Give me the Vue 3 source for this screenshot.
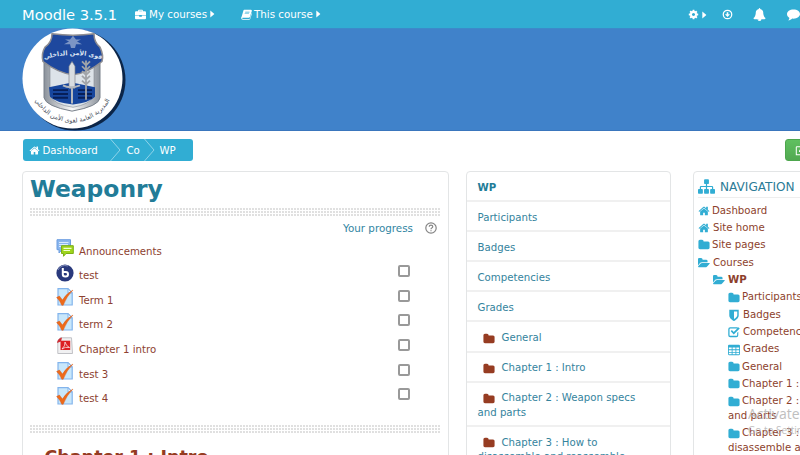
<script setup>
import { h } from 'vue'

const icons = {
  folder: ['0 0 1792 1792', 'M1728 608v704q0 92-66 158t-158 66h-1216q-92 0-158-66t-66-158v-960q0-92 66-158t158-66h320q92 0 158 66t66 158v32h672q92 0 158 66t66 158z'],
  open: ['0 0 1850 1792', 'M1815 952q0 31-31 66l-336 396q-43 51-120.500 86.500t-143.500 35.500h-1088q-34 0-60.500-13t-26.500-43q0-31 31-66l336-396q43-51 120.500-86.500t143.500-35.500h1088q34 0 60.500 13t26.500 43zm-343-344v160h-832q-94 0-197 47.500t-164 119.500l-337 396-5 6q0-4-.5-12.500t-.5-12.500v-960q0-92 66-158t158-66h320q92 0 158 66t66 158v32h544q92 0 158 66t66 158z'],
  home: ['0 0 1792 1792', 'M1472 992v480q0 26-19 45t-45 19h-384v-384h-256v384h-384q-26 0-45-19t-19-45v-480q0-1 .5-3t.5-3l575-474 575 474q1 2 1 6zm223-69l-62 74q-8 9-21 11h-3q-13 0-21-7l-692-577-692 577q-12 8-24 7-13-2-21-11l-62-74q-8-10-7-23.500t11-21.500l719-599q32-26 76-26t76 26l244 204v-195q0-14 9-23t23-9h192q14 0 23 9t9 23v408l219 182q10 8 11 21.500t-7 23.500z'],
  sitemap: ['0 0 1792 1792', 'M1792 1248v320q0 40-28 68t-68 28h-320q-40 0-68-28t-28-68v-320q0-40 28-68t68-28h96v-192h-512v192h96q40 0 68 28t28 68v320q0 40-28 68t-68 28h-320q-40 0-68-28t-28-68v-320q0-40 28-68t68-28h96v-192h-512v192h96q40 0 68 28t28 68v320q0 40-28 68t-68 28h-320q-40 0-68-28t-28-68v-320q0-40 28-68t68-28h96v-192q0-52 38-90t90-38h512v-192h-96q-40 0-68-28t-28-68v-320q0-40 28-68t68-28h320q40 0 68 28t28 68v320q0 40-28 68t-68 28h-96v192h512q52 0 90 38t38 90v192h96q40 0 68 28t28 68z'],
  bell: ['0 0 1792 1792', 'M912 1696q0-16-16-16-59 0-101.500-42.500t-42.500-101.500q0-16-16-16t-16 16q0 73 51.500 124.500t124.500 51.500q16 0 16-16zm816-288q0 52-38 90t-90 38h-448q0 106-75 181t-181 75-181-75-75-181h-448q-52 0-90-38t-38-90q50-42 91-88t85-119.500 74.500-158.500 50-206 19.500-260q0-152 117-282.500t307-158.500q-8-19-8-39 0-40 28-68t68-28 68 28 28 68q0 20-8 39 190 28 307 158.500t117 282.500q0 139 19.500 260t50 206 74.500 158.500 85 119.500 91 88z'],
  cog: ['0 0 1792 1792', 'M1152 896q0-106-75-181t-181-75-181 75-75 181 75 181 181 75 181-75 75-181zm512-109v222q0 12-8 23t-20 13l-185 28q-19 54-39 91 35 50 107 138 10 12 10 25t-9 23q-27 37-99 108t-94 71q-12 0-26-9l-138-108q-44 23-91 38-16 136-29 186-7 28-36 28h-222q-14 0-24.500-8.500t-11.500-21.500l-28-184q-49-16-90-37l-141 107q-10 9-25 9-14 0-25-11-126-114-165-168-7-10-7-23 0-12 8-23 15-21 51-66.500t54-70.500q-27-50-41-99l-183-27q-13-2-21-12.500t-8-23.500v-222q0-12 8-23t19-13l186-28q14-46 39-92-40-57-107-138-10-12-10-24 0-10 9-23 26-36 98.500-107.500t94.500-71.500q13 0 26 10l138 107q44-23 91-38 16-136 29-186 7-28 36-28h222q14 0 24.500 8.500t11.500 21.500l28 184q49 16 90 37l142-107q9-9 24-9 13 0 25 10 129 119 165 170 7 8 7 22 0 12-8 23-15 21-51 66.500t-54 70.500q26 50 41 98l183 28q13 2 21 12.500t8 23.500z'],
  caret: ['0 0 5 8', 'M.3 .6L4.400 4L.3 7.400z'],
  briefcase: ['0 0 14 14', 'M4 3V2q0-1 1-1h4q1 0 1 1v1h2.700q1.300 0 1.300 1.300V7.500H0V4.300Q0 3 1.300 3zM5.200 3h3.600V2.200H5.200zM0 8.300h5.300v1.500h3.400V8.300H14v3.400q0 1.300-1.300 1.300H1.300Q0 13 0 11.700z'],
  book: ['0 0 14 14', 'M4.200 1h8.300q1.700.2 1.200 1.800l-2.400 7.500q-.3.900-1.300.9H2q-.8.200-.5.900.3.500 1.100.5h8q.5 0 .7-.5L13.500 5q.6.600.3 1.500L11.700 12.800q-.4 1-1.400 1H2.300Q.3 13.700.2 11.600.2 10.700.9 9.600L3 2.200Q3.300 1.200 4.200 1zM5.500 3.500L5.200 4.300h5.500l.3-.8zM4.800 5.700l-.3.800H10l.3-.8z'],
  comment: ['0 0 14 14', 'M7 1.500c4 0 7 2.200 7 5s-3 5-7 5l-1.300-.1C4.400 12.600 3 13.200 1.400 13.400c.7-.8 1.100-1.600 1.200-2.700C1 9.700 0 8.200 0 6.500c0-2.800 3-5 7-5z'],
  down: ['0 0 14 14', 'M7 .8a6.200 6.200 0 1 1 0 12.400A6.200 6.200 0 0 1 7 .8zM7 2.400a4.600 4.600 0 1 0 0 9.200 4.600 4.600 0 0 0 0-9.200zM6 4h2v2.600h2.200L7 10.200 3.800 6.600H6z'],
  shield: ['0 0 14 14', 'M1.500 1h11v6.500C12.500 10.500 9 13 7 14 5 13 1.500 10.500 1.500 7.500zM7 2.800v9c2-1.200 3.800-2.700 3.800-4.500V2.800z'],
  check: ['0 0 14 14', 'M2.500 1.500h8q.7 0 1.200.3l-1 1H2.800q-1 0-1 1v6.700q0 1 1 1h6.900q1 0 1-1V8l1.300-1.300v4q0 2.300-2.300 2.300H2.500Q.3 13 .3 10.700V3.800q0-2.300 2.200-2.300zM3.200 6l1.300-1.300 2.200 2.200 5.500-5.400L13.700 3l-7 7z'],
  table: ['0 0 14 14', 'M1.200 1h11.600q1.200 0 1.200 1.200v9.600q0 1.200-1.200 1.200H1.200Q0 13 0 11.800V2.200Q0 1 1.200 1zM1 4v2.200h3.300V4zM5.300 4v2.200h3.400V4zM9.700 4v2.200H13V4zM1 7.200v2h3.300v-2zM5.300 7.200v2h3.400v-2zM9.700 7.200v2H13v-2zM1 10.200V12h3.300v-1.800zM5.300 10.200V12h3.400v-1.800zM9.700 10.200V12H13v-1.800z'],
  edit: ['0 0 14 14', 'M2.500 1.500h8v1.300H2.300v8.900h9V8l1.300-1v6H1V3q0-1.500 1.500-1.500zM5 8.800l.4-2.200L11.500.8l2 2L7.200 9z'],
}

const Icon = ({ name }) =>
  h('svg', { viewBox: icons[name][0], 'aria-hidden': 'true' }, [
    h('path', { d: icons[name][1], fill: 'currentColor', 'fill-rule': 'evenodd' }),
  ])
Icon.props = ['name']

const activities = [
  { type: 'forum', label: 'Announcements' },
  { type: 'bbb', label: 'test', track: true },
  { type: 'quiz', label: 'Term 1', track: true },
  { type: 'quiz', label: 'term 2', track: true },
  { type: 'pdf', label: 'Chapter 1 intro', track: true },
  { type: 'quiz', label: 'test 3', track: true },
  { type: 'quiz', label: 'test 4', track: true },
]

const links = [
  { label: 'WP', bold: true },
  { label: 'Participants' },
  { label: 'Badges' },
  { label: 'Competencies' },
  { label: 'Grades' },
  { label: 'General', folder: true },
  { label: 'Chapter 1 : Intro', folder: true },
  { label: 'Chapter 2 : Weapon specs', rest: 'and parts', folder: true },
  { label: 'Chapter 3 : How to', rest: 'disassemble and reassemble', folder: true },
]

const tree = [
  { icon: 'home', label: 'Dashboard', level: 0 },
  { icon: 'home', label: 'Site home', level: 0, wide: true },
  { icon: 'folder', label: 'Site pages', level: 0 },
  { icon: 'open', label: 'Courses', level: 0, wide: true },
  { icon: 'open', label: 'WP', level: 1, bold: true, wide: true },
  { icon: 'folder', label: 'Participants', level: 2 },
  { icon: 'shield', label: 'Badges', level: 2, wide: true },
  { icon: 'check', label: 'Competencies', level: 2, wide: true },
  { icon: 'table', label: 'Grades', level: 2, wide: true },
  { icon: 'folder', label: 'General', level: 2 },
  { icon: 'folder', label: 'Chapter 1 : Intro', level: 2 },
  { icon: 'folder', label: 'Chapter 2 :', rest: 'and parts', level: 2 },
  { icon: 'folder', label: 'Chapter 3 :', rest: 'disassemble and', level: 2 },
]
</script>

<template>
  <div class="page">
    <header class="topbar">
      <span class="brand">Moodle 3.5.1</span>
      <a class="menu courses"><Icon name="briefcase" class="mi" />My courses<Icon name="caret" class="caret" /></a>
      <a class="menu this"><Icon name="book" class="mi" />This course<Icon name="caret" class="caret" /></a>
      <div class="tools">
        <Icon name="cog" class="t-cog" /><Icon name="caret" class="caret" />
        <Icon name="down" class="t-down" /><Icon name="bell" class="t-bell" /><Icon name="comment" class="t-comment" />
      </div>
    </header>

    <div class="banner">
      <svg class="logo" viewBox="0 0 106 104">
        <defs>
          <path id="motto" d="M20 32Q51 22 82 32" />
          <path id="ring" d="M8 52A42.500 42.500 0 0 0 93 52" />
          <linearGradient id="silver" x1="0" x2="1"><stop offset="0" stop-color="#8b929b" /><stop offset=".5" stop-color="#fafafa" /><stop offset="1" stop-color="#8d949d" /></linearGradient>
        </defs>
        <circle cx="53" cy="52" r="50.500" fill="#0b2548" />
        <circle cx="50.500" cy="50.500" r="50" fill="#fff" />
        <g transform="translate(0 1) scale(1 .955)">
          <path d="M22 34V72Q24 81 50 86Q77 81 78 72V34z" fill="url(#silver)" stroke="#777f89" />
          <path d="M28 37H72V70Q68 79 51 82Q32 79 28 70z" fill="#dde3e9" stroke="#7e8791" stroke-width=".6" />
          <path d="M30 5Q51 8 72 5Q72 14 78 19Q82 28 80 34Q66 46 51 48Q36 46 21 34Q19 26 23 19Q30 14 30 5z" fill="#1e489e" stroke="#8e8d91" stroke-width="1.500" />
          <path d="M51 7L54 11H59L55 13L60 16H54L53 20H49L48 16H42L47 13L43 11H48z" fill="#7c95c5" />
          <path d="M27 61L50 56L73 61V71Q68 77 51 79Q33 77 28 71z" fill="#17469d" />
          <path d="M31 64H46M31 68H46M31 72H46M56 64H70M56 68H70M56 72H70" stroke="#071f58" stroke-width="2" />
          <path d="M47 39L50 34L53 39V62H47z" fill="#d9dde1" stroke="#81868e" stroke-width=".7" />
          <path d="M41 59Q48 63 58 59M50 61V78" fill="none" stroke="#b5b8bd" stroke-width="2" />
          <path d="M64 74V33M64 38l-4-4M64 38l4-4M64 43l-4-4M64 43l4-4M64 48l-4-4M64 48l4-4M64 53l-4-4M64 53l4-4M64 58l-4-4M64 58l4-4" stroke="#a1a4a8" stroke-width="1.800" fill="none" />
        </g>
        <text class="ar motto" text-anchor="middle"><textPath href="#motto" startOffset="50%">قوى الأمن الداخلي</textPath></text>
        <text class="ar ring" text-anchor="middle"><textPath href="#ring" startOffset="50%">المديرية العامة لقوى الأمن الداخلي</textPath></text>
      </svg>
    </div>

    <div class="crumbrow">
      <nav class="crumbs">
        <Icon name="home" class="ch" /><span class="c1">Dashboard</span>
        <svg class="chev" viewBox="0 0 11 22"><path d="M.5 0L10 11L.5 22" /></svg>
        <span class="c2">Co</span>
        <svg class="chev" viewBox="0 0 11 22"><path d="M.5 0L10 11L.5 22" /></svg>
        <span class="c3">WP</span>
      </nav>
      <button class="edit"><Icon name="edit" class="ei" /></button>
    </div>

    <div class="columns">
      <main class="panel main">
        <h1>Weaponry</h1>
        <div class="dots"></div>
        <div class="progress">Your progress
          <svg class="help" viewBox="0 0 12 12"><circle cx="6" cy="6" r="5.200" /><path d="M4.200 4.800Q4.300 3.200 6 3.200T7.800 4.700Q7.700 5.500 6.700 6Q6 6.400 6 7.200M6 8.300V9.300" /></svg>
        </div>
        <ul class="acts">
          <li v-for="a in activities" :key="a.label">
            <svg v-if="a.type === 'forum'" class="ai" viewBox="0 0 18 18">
              <path d="M1 .7h13.500v10H6L3 14v-3.300H1z" fill="#8ab6ee" stroke="#6c9de0" /><path d="M3 3.500h9.500M3 5.500h9M3 7.500h3" stroke="#d8e9ff" />
              <path d="M5.500 6.700H17.300V14.500H10L7.500 17.300V14.500h-2z" fill="#9ed51c" stroke="#7caf16" /><path d="M7.500 9.300H15.500M7.500 11.500H14" stroke="#f2ffd2" stroke-width="1.200" />
            </svg>
            <svg v-else-if="a.type === 'bbb'" class="ai" viewBox="0 0 18 18">
              <circle cx="9" cy="9" r="8.600" fill="#29397c" /><path d="M2 6Q5 0 12 2" stroke="#8490bb" fill="none" /><path d="M6.800 4v6.200q0 2.300 2.400 2.300h.5q2.300 0 2.300-2.300t-2.300-2.300H7" fill="none" stroke="#fff" stroke-width="2" />
            </svg>
            <svg v-else-if="a.type === 'pdf'" class="ai" viewBox="0 0 18 18">
              <path d="M4 .8H15.500L16.500 16.500H1.800V4z" fill="#f1f1f2" stroke="#c0c1c5" /><path d="M1 6Q1.500 1.500 6 .5L5 4.500z" fill="#cf2d35" /><path d="M4.500 3.700H14.200V13H4.500z" fill="#dc1f23" /><path d="M6 12Q9.500 9 9 5Q10 9 13.500 10.500Q9 9.500 6 12z" fill="none" stroke="#fff" stroke-width=".7" />
            </svg>
            <svg v-else class="ai" viewBox="0 0 18 18">
              <path d="M2 .7H12L16.200 5V17H2z" fill="#c8e7fb" stroke="#83b4ec" stroke-width="1.200" /><path d="M12 .7V5h4.200z" fill="#eff9ff" stroke="#83b4ec" />
              <path d="M.6 9.500L3.400 8L6.500 12Q10 5.500 17 2Q10.500 8.500 7.200 17.300H5.800Q3.500 12 .6 9.500z" fill="#ed6a1b" stroke="#d95510" stroke-width=".4" />
            </svg>
            <a>{{ a.label }}</a>
            <span v-if="a.track" class="box"></span>
          </li>
        </ul>
        <div class="dots"></div>
        <h2>Chapter 1 : Intro</h2>
      </main>

      <aside class="panel menuPanel">
        <a v-for="l in links" :key="l.label" class="link" :class="{ bold: l.bold }">
          <span class="first"><Icon v-if="l.folder" name="folder" class="fi" />{{ l.label }}</span>
          <span v-if="l.rest" class="rest">{{ l.rest }}</span>
        </a>
      </aside>

      <aside class="panel nav">
        <div class="navhead"><Icon name="sitemap" class="sm" />NAVIGATION</div>
        <a v-for="n in tree" :key="n.label" class="node" :class="['l' + n.level, { bold: n.bold, wide: n.wide }]">
          <span class="first"><Icon :name="n.icon" class="ni" />{{ n.label }}</span>
          <span v-if="n.rest" class="rest">{{ n.rest }}</span>
        </a>
      </aside>
    </div>

    <div class="watermark"><div class="w1">Activate</div><div class="w2">Go to Settings</div></div>
  </div>
</template>

<style>
body { background: #fff; overflow: hidden; }
</style>

<style scoped>
* { box-sizing: border-box; }
.page { position: relative; width: 800px; height: 455px; overflow: hidden; font-family: "DejaVu Sans", Verdana, sans-serif; font-size: 10.200px; background: #fff; }
svg { flex: none; display: block; }
.topbar { height: 28px; display: flex; align-items: center; background: #31add3; color: #fff; padding-left: 22px; }
.brand { font-size: 14.700px; width: 113px; white-space: nowrap; }
.menu { display: flex; align-items: center; white-space: nowrap; font-size: 10.300px; }
.courses { width: 106px; }
.mi { width: 11px; height: 11px; margin-right: 3px; }
.this .mi { margin-right: 2px; }
.caret { width: 5px; height: 8px; margin-left: 3px; }
.tools { margin-left: auto; display: flex; align-items: center; height: 28px; padding-top: 1px; }
.t-cog { width: 11px; height: 11px; }
.t-down { width: 11px; height: 11px; margin-left: 15px; }
.t-bell { width: 13px; height: 13px; margin-left: 20px; }
.t-comment { width: 13px; height: 13px; margin-left: 21px; margin-right: 0; }
.banner { height: 103px; background: #4082ca; border-bottom: 1px solid #3a76bd; border-top: 1px solid #3c8aca; padding-left: 22px; }
.logo { width: 106px; height: 104px; margin-top: -1px; }
.ar { font-family: "DejaVu Sans", sans-serif; }
.motto { font-size: 6.300px; fill: #dce4f2; font-weight: bold; }
.ring { font-size: 6.300px; fill: #4a4f5c; }
.crumbrow { display: flex; justify-content: space-between; padding: 8px 0 0 22.500px; height: 40px; }
.crumbs { width: 170px; height: 22px; display: flex; align-items: center; background: #31add3; color: #fff; border-radius: 3px; padding-left: 6px; }
.ch { width: 11px; height: 11px; margin-right: 3px; }
.c1 { width: 67px; }
.chev { width: 11px; height: 22px; }
.chev path { fill: none; stroke: #8fd3e9; stroke-width: 1; }
.c2 { width: 17px; margin-left: 6px; }
.c3 { margin-left: 5px; }
.edit { width: 30px; margin-right: -15px; height: 22px; border: 1px solid #4da64d; border-radius: 3px; background: linear-gradient(#60c060, #51a951); color: #fff; padding: 0 0 0 9px; }
.ei { width: 11px; height: 11px; }
.columns { display: flex; align-items: flex-start; padding-left: 22px; }
.panel { border: 1px solid #e3e5e6; border-radius: 4px; flex: none; height: 320px; }
.main { width: 427px; margin-right: 17px; padding: 3px 7px 0 7px; }
h1 { margin: 0; font-size: 23.400px; line-height: 28px; color: #227c98; height: 33px; }
.dots { height: 8px; background: radial-gradient(circle at 1px 1px, #e0e0e0 0.700px, #fff 1.300px) 0 0 / 3px 3px; margin-right: 1px; }
.progress { display: flex; align-items: center; justify-content: flex-end; height: 22px; color: #3185a2; margin-top: 1px; padding-right: 4px; font-size: 10.350px; }
.help { width: 12px; height: 12px; margin-left: 12px; }
.help circle, .help path { fill: none; stroke: #858585; stroke-width: 1.200; }
.acts { list-style: none; margin: 0; padding: 0 0 0 25px; height: 186px; }
.acts li { display: flex; height: 24.550px; align-items: center; }
.ai { width: 18px; height: 18px; margin: -6px 5px 0 1px; }
.acts a { color: #8d4130; }
.box { width: 12px; height: 12px; border: 2px solid #999; border-radius: 2px; margin-left: auto; margin-right: 31px; margin-top: -9px; }
h2 { margin: 12px 0 0 14.500px; font-size: 17.500px; line-height: 24px; color: #943b21; white-space: nowrap; }
.menuPanel { width: 205px; margin-right: 22px; }
.link { display: block; height: 30.100px; border-bottom: 2px solid #f0f0f0; padding: 8.500px 0 0 10.500px; color: #34839d; line-height: 14.600px; white-space: nowrap; }
.link:has(.rest) { height: 44.500px; }
.first { display: flex; align-items: center; }
.fi { width: 12px; height: 12px; color: #963c22; margin: 1px 7px 0 5px; }
.rest { display: block; }
.bold { font-weight: bold; }
.link.bold { color: #227c98; }
.nav { width: 220px; padding: 5px 0 0 4px; }
.navhead { display: flex; align-items: center; height: 21px; border-bottom: 1px solid #eee; color: #2c7c97; font-size: 12.100px; margin-bottom: 5.500px; }
.sm { width: 17px; height: 17px; color: #31add3; margin: -2px 5px 0 0; }
.node { display: block; line-height: 14.600px; padding-bottom: 2.750px; color: #8d3f2c; white-space: nowrap; }
.ni { width: 12px; height: 12px; color: #31add3; margin-right: 2px; }
.wide .ni { margin-right: 3px; }
.l1 { padding-left: 15px; }
.l2 { padding-left: 30px; }
.watermark { position: absolute; left: 748px; top: 405px; color: #b0b0b0; opacity: .8; font-family: "Open Sans", sans-serif; white-space: nowrap; }
.w1 { font-size: 14px; line-height: 18px; }
.w2 { font-size: 10px; line-height: 14px; }
</style>
